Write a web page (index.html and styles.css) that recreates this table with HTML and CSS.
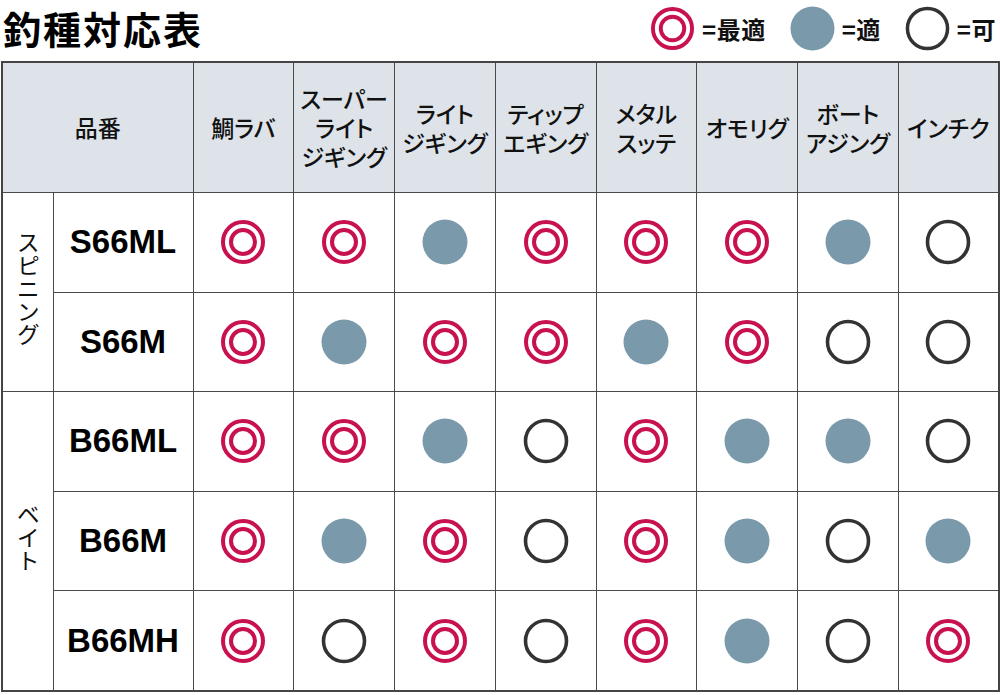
FILE: index.html
```html
<!DOCTYPE html>
<html lang="ja">
<head>
<meta charset="utf-8">
<link rel="stylesheet" href="styles.css">
</head>
<body>
<svg width="0" height="0" class="defs">
  <defs>
    <symbol id="best" viewBox="0 0 46 46">
      <circle cx="23" cy="23" r="20" fill="none" stroke="#c8124f" stroke-width="4"/>
      <circle cx="23" cy="23" r="12" fill="none" stroke="#c8124f" stroke-width="4"/>
    </symbol>
    <symbol id="good" viewBox="0 0 46 46">
      <circle cx="23" cy="23" r="22.5" fill="#7a9aab"/>
    </symbol>
    <symbol id="ok" viewBox="0 0 46 46">
      <circle cx="23" cy="23" r="20.5" fill="none" stroke="#333" stroke-width="3.6"/>
    </symbol>
  </defs>
</svg>
<header class="top">
  <h1 class="title">釣種対応表</h1>
  <div class="legend">
    <svg class="mk"><use href="#best"/></svg><span class="lg-text">=最適</span>
    <svg class="mk"><use href="#good"/></svg><span class="lg-text">=適</span>
    <svg class="mk"><use href="#ok"/></svg><span class="lg-text">=可</span>
  </div>
</header>
<table class="chart">
  <colgroup>
    <col class="c-group"><col class="c-model">
    <col class="c-d"><col class="c-d"><col class="c-d"><col class="c-d">
    <col class="c-d"><col class="c-d"><col class="c-d"><col class="c-d">
  </colgroup>
  <thead>
    <tr class="head">
      <th colspan="2">品番</th>
      <th>鯛ラバ</th>
      <th>スーパー<br>ライト<br>ジギング</th>
      <th>ライト<br>ジギング</th>
      <th>ティップ<br>エギング</th>
      <th>メタル<br>スッテ</th>
      <th>オモリグ</th>
      <th>ボート<br>アジング</th>
      <th>インチク</th>
    </tr>
  </thead>
  <tbody>
    <tr>
      <td rowspan="2" class="group"><span class="vert">スピニング</span></td>
      <td class="model">S66ML</td>
      <td><svg class="mk"><use href="#best"/></svg></td>
      <td><svg class="mk"><use href="#best"/></svg></td>
      <td><svg class="mk"><use href="#good"/></svg></td>
      <td><svg class="mk"><use href="#best"/></svg></td>
      <td><svg class="mk"><use href="#best"/></svg></td>
      <td><svg class="mk"><use href="#best"/></svg></td>
      <td><svg class="mk"><use href="#good"/></svg></td>
      <td><svg class="mk"><use href="#ok"/></svg></td>
    </tr>
    <tr>
      <td class="model">S66M</td>
      <td><svg class="mk"><use href="#best"/></svg></td>
      <td><svg class="mk"><use href="#good"/></svg></td>
      <td><svg class="mk"><use href="#best"/></svg></td>
      <td><svg class="mk"><use href="#best"/></svg></td>
      <td><svg class="mk"><use href="#good"/></svg></td>
      <td><svg class="mk"><use href="#best"/></svg></td>
      <td><svg class="mk"><use href="#ok"/></svg></td>
      <td><svg class="mk"><use href="#ok"/></svg></td>
    </tr>
    <tr>
      <td rowspan="3" class="group"><span class="vert">ベイト</span></td>
      <td class="model">B66ML</td>
      <td><svg class="mk"><use href="#best"/></svg></td>
      <td><svg class="mk"><use href="#best"/></svg></td>
      <td><svg class="mk"><use href="#good"/></svg></td>
      <td><svg class="mk"><use href="#ok"/></svg></td>
      <td><svg class="mk"><use href="#best"/></svg></td>
      <td><svg class="mk"><use href="#good"/></svg></td>
      <td><svg class="mk"><use href="#good"/></svg></td>
      <td><svg class="mk"><use href="#ok"/></svg></td>
    </tr>
    <tr>
      <td class="model">B66M</td>
      <td><svg class="mk"><use href="#best"/></svg></td>
      <td><svg class="mk"><use href="#good"/></svg></td>
      <td><svg class="mk"><use href="#best"/></svg></td>
      <td><svg class="mk"><use href="#ok"/></svg></td>
      <td><svg class="mk"><use href="#best"/></svg></td>
      <td><svg class="mk"><use href="#good"/></svg></td>
      <td><svg class="mk"><use href="#ok"/></svg></td>
      <td><svg class="mk"><use href="#good"/></svg></td>
    </tr>
    <tr>
      <td class="model">B66MH</td>
      <td><svg class="mk"><use href="#best"/></svg></td>
      <td><svg class="mk"><use href="#ok"/></svg></td>
      <td><svg class="mk"><use href="#best"/></svg></td>
      <td><svg class="mk"><use href="#ok"/></svg></td>
      <td><svg class="mk"><use href="#best"/></svg></td>
      <td><svg class="mk"><use href="#good"/></svg></td>
      <td><svg class="mk"><use href="#ok"/></svg></td>
      <td><svg class="mk"><use href="#best"/></svg></td>
    </tr>
  </tbody>
</table>
</body>
</html>
```
FILE: styles.css
```css
html, body {
  margin: 0;
  padding: 0;
  background: #fff;
}
body {
  width: 1000px;
  height: 695px;
  overflow: hidden;
  font-family: "Noto Sans CJK JP", "Noto Sans", sans-serif;
  color: #111;
}
.defs {
  position: absolute;
  width: 0;
  height: 0;
}
.top {
  height: 61px;
  display: flex;
  align-items: flex-start;
  justify-content: space-between;
  padding: 0 4px 0 3px;
}
.title {
  margin: 0;
  font-size: 38px;
  font-weight: 700;
  letter-spacing: 2px;
  line-height: 55px;
  color: #000;
}
.legend {
  display: flex;
  align-items: center;
  padding-top: 6px;
}
.legend .mk {
  width: 45px;
  height: 45px;
}
.lg-text {
  font-size: 24px;
  font-weight: 700;
  color: #111;
  margin-left: 7px;
  margin-right: 24px;
  letter-spacing: 0.5px;
}
.lg-text:last-child {
  margin-right: 0;
}
.chart {
  margin-left: 1px;
  width: 997px;
  border-collapse: collapse;
  table-layout: fixed;
  border: 2px solid #444;
}
.c-group { width: 51px; }
.c-model { width: 140px; }
.c-d { width: 100.75px; }
.chart th, .chart td {
  border: 1.6px solid #4a4a4a;
  padding: 0;
  text-align: center;
  vertical-align: middle;
}
.head th {
  background: #dde3e8;
  height: 129px;
  font-weight: 500;
  font-size: 23px;
  line-height: 29px;
  color: #111;
  font-feature-settings: "palt";
}
.chart tbody td {
  height: 98.6px;
}
.model {
  font-family: "Liberation Sans", Arial, sans-serif;
  font-weight: 700;
  font-size: 33px;
  color: #000;
}
.group {
  font-size: 23px;
}
.vert {
  writing-mode: vertical-rl;
  text-orientation: upright;
  display: inline-block;
  line-height: 1;
  letter-spacing: 0;
}
.chart .mk {
  width: 46px;
  height: 46px;
  display: block;
  margin: 0 auto;
}
```
